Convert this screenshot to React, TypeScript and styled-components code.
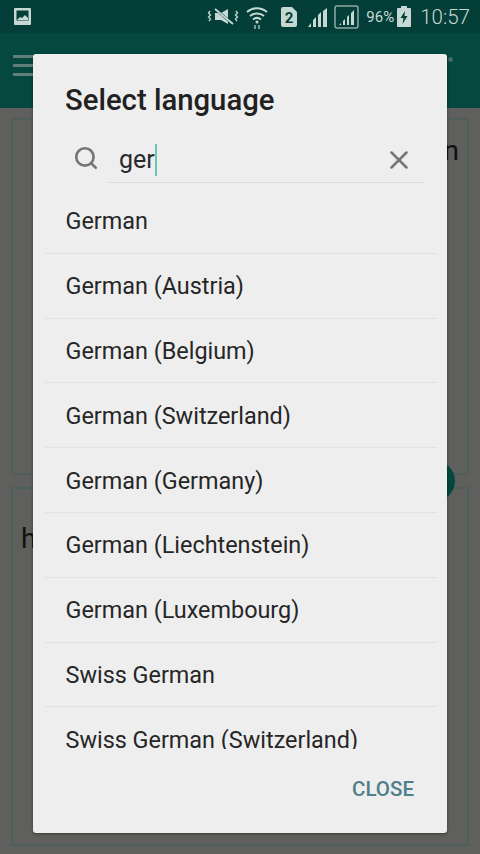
import React from "react";
import styled, { createGlobalStyle } from "styled-components";
import { Search, X } from "lucide-react";

const languages = [
  "German",
  "German (Austria)",
  "German (Belgium)",
  "German (Switzerland)",
  "German (Germany)",
  "German (Liechtenstein)",
  "German (Luxembourg)",
  "Swiss German",
  "Swiss German (Switzerland)",
];

const GlobalStyle = createGlobalStyle`
  html, body {
    margin: 0;
    padding: 0;
    background: #5d5f5d;
  }
  * {
    box-sizing: border-box;
  }
`;

const Screen = styled.div`
  position: relative;
  width: 480px;
  height: 854px;
  overflow: hidden;
  display: flex;
  flex-direction: column;
  font-family: Roboto, "Liberation Sans", sans-serif;
  background: #5f5f5e;
`;

const StatusBar = styled.div`
  height: 33px;
  flex: none;
  display: flex;
  align-items: center;
  padding: 0 10px 0 13px;
  background: #033f38;
  color: #c6d8d3;
`;

const StatusIcons = styled.div`
  margin-left: auto;
  display: flex;
  align-items: center;
`;

const Battery = styled.span`
  font-size: 15px;
  margin: 0 3px 0 7px;
`;

const Clock = styled.span`
  font-size: 20.5px;
  font-weight: 300;
  margin-left: 9px;
`;

const AppBar = styled.div`
  height: 75px;
  flex: none;
  display: flex;
  align-items: center;
  justify-content: space-between;
  padding: 0 27px 10px 13px;
  background: #04483f;
`;

const MenuLines = styled.div`
  width: 24px;
  height: 21px;
  display: flex;
  flex-direction: column;
  justify-content: space-between;
`;

const MenuLine = styled.span`
  height: 3px;
  background: #5f8079;
`;

const OverflowDot = styled.span`
  width: 5px;
  height: 5px;
  margin-bottom: 12px;
  border-radius: 50%;
  background: #3f6c64;
`;

const Cards = styled.div`
  flex: 1;
  display: flex;
  flex-direction: column;
  gap: 12px;
  padding: 10px 11px 8px;
`;

const TopCard = styled.div`
  height: 357px;
  flex: none;
  border: 2px solid #4e5f5a;
  padding: 14px 8px;
  text-align: right;
  font-size: 28px;
  color: #111;
  background: #5f5f5e;
`;

const BottomCard = styled.div`
  flex: 1;
  border: 2px solid #4e5f5a;
  padding: 33px 8px;
  font-size: 28px;
  color: #111;
  background: #5f5f5e;
`;

const Fab = styled.div`
  position: absolute;
  left: 420px;
  top: 461px;
  width: 35px;
  height: 40px;
  border-radius: 0 20px 20px 0;
  background: #03473f;
`;

const Dialog = styled.div`
  position: absolute;
  left: 33px;
  top: 54px;
  width: 414px;
  height: 779px;
  display: flex;
  flex-direction: column;
  border-radius: 3px;
  background: #eeeeee;
  box-shadow: 0 1px 3px rgba(0, 0, 0, 0.4);
`;

const Title = styled.h2`
  margin: 0;
  padding: 28px 32px 0;
  height: 71px;
  flex: none;
  font-size: 29.3px;
  line-height: 36px;
  font-weight: 500;
  color: #212121;
`;

const SearchRow = styled.div`
  height: 58px;
  flex: none;
  display: flex;
  align-items: center;
  padding: 0 22px 0 40px;
  color: #757575;
`;

const SearchField = styled.div`
  flex: 1;
  height: 58px;
  margin-left: 9px;
  display: flex;
  align-items: center;
  justify-content: space-between;
  padding: 12px 11px 0 11px;
  border-bottom: 1px solid #dcdcdc;
`;

const SearchGlyph = styled.span`
  display: flex;
  padding-top: 8px;
`;

const Query = styled.span`
  font-size: 25px;
  line-height: 32px;
  color: #2a2a2a;
  border-right: 2px solid #6fc4b6;
`;

const List = styled.ul`
  flex: 1;
  min-height: 0;
  margin: 6px 0 0;
  padding: 0 10px 0 12px;
  list-style: none;
  overflow: hidden;
`;

const Item = styled.li`
  height: 64.8px;
  display: flex;
  align-items: center;
  padding: 1px 0 0 20.5px;
  font-size: 23.4px;
  color: #262626;
  border-bottom: 1px solid #e2e2e2;
`;

const Footer = styled.div`
  height: 84px;
  flex: none;
  display: flex;
  justify-content: flex-end;
  padding: 25px 33px 0;
`;

const CloseButton = styled.button`
  height: 30px;
  padding: 0;
  border: 0;
  background: none;
  font-family: inherit;
  font-size: 20.5px;
  font-weight: 500;
  color: #4f7f8a;
`;

const App: React.FC = () => {
  return (
    <Screen>
      <GlobalStyle />
      <StatusBar>
        <svg width="19" height="19" viewBox="0 0 19 19">
          <rect x="1" y="1" width="17" height="17" rx="1" fill="#c6d8d3" />
          <rect x="3.5" y="3.5" width="12" height="10" fill="#033f38" />
          <path d="M4 13l3-3 2 1 3-3 3 3v2z" fill="#c6d8d3" />
        </svg>
        <StatusIcons>
          <svg width="33" height="20" viewBox="0 0 33 20" fill="none" stroke="#c6d8d3">
            <path d="M8 6h6l7-4v15l-7-4H8z" fill="#c6d8d3" stroke="none" />
            <path d="M7 1l20 17" strokeWidth="2.500" stroke="#033f38" />
            <path d="M8 2l18 15" strokeWidth="1.800" />
            <path d="M3 4L1.500 6l2 2-2 2 2 2L2 14M29 4l1.500 2-2 2 2 2-2 2 1.500 2" strokeWidth="1.300" />
          </svg>
          <svg width="22" height="26" viewBox="0 0 22 26" fill="none" stroke="#c6d8d3" strokeWidth="2" style={{ marginLeft: 6 }}>
            <path d="M1 8c6-5 14-5 20 0M4 12c4-3.500 10-3.500 14 0M7 15.500c2.500-2 5.500-2 8 0" />
            <circle cx="11" cy="18" r="1.500" fill="#c6d8d3" stroke="none" />
            <path d="M9 21v4M13 21v4" strokeWidth="1.200" />
          </svg>
          <svg width="18" height="22" viewBox="0 0 18 22" style={{ marginLeft: 12 }}>
            <path d="M1 3a2 2 0 0 1 2-2h9l5 5v13a2 2 0 0 1-2 2H3a2 2 0 0 1-2-2z" fill="#c6d8d3" />
            <text x="9" y="17" textAnchor="middle" fontSize="15" fontWeight="700" fontFamily="Roboto, sans-serif" fill="#033f38">2</text>
          </svg>
          <svg width="22" height="22" viewBox="0 0 22 22" fill="#c6d8d3" style={{ marginLeft: 9 }}>
            <path d="M1 21l3-4v4zM6 21v-7l3-3v10zM11 21V9l3-3v15zM16 21V5l4-3v19z" />
          </svg>
          <svg width="25" height="24" viewBox="0 0 25 24" fill="#c6d8d3" style={{ marginLeft: 5 }}>
            <rect x="1" y="1" width="23" height="22" rx="2" fill="none" stroke="#8fa8a2" strokeWidth="1.500" />
            <path d="M5 20l2-2v2zM9 20v-4l2-2v6zM13 20v-8l2-2v10zM17 20V8l3-3v15z" />
          </svg>
          <Battery>96%</Battery>
          <svg width="14" height="21" viewBox="0 0 14 21">
            <path d="M4 0h6v2h3a1 1 0 0 1 1 1v17a1 1 0 0 1-1 1H1a1 1 0 0 1-1-1V3a1 1 0 0 1 1-1h3z" fill="#c6d8d3" />
            <path d="M8 5L3.500 12H6.500L5.500 18 10.500 10H7.500z" fill="#033f38" />
          </svg>
          <Clock>10:57</Clock>
        </StatusIcons>
      </StatusBar>
      <AppBar>
        <MenuLines>
          <MenuLine />
          <MenuLine />
          <MenuLine />
        </MenuLines>
        <OverflowDot />
      </AppBar>
      <Cards>
        <TopCard>n</TopCard>
        <BottomCard>h</BottomCard>
      </Cards>
      <Fab />
      <Dialog>
        <Title>Select language</Title>
        <SearchRow>
          <SearchGlyph>
            <Search size={26} strokeWidth={2.4} />
          </SearchGlyph>
          <SearchField>
            <Query>ger</Query>
            <X size={30} strokeWidth={2} />
          </SearchField>
        </SearchRow>
        <List>
          {languages.map((language) => (
            <Item key={language}>{language}</Item>
          ))}
        </List>
        <Footer>
          <CloseButton>CLOSE</CloseButton>
        </Footer>
      </Dialog>
    </Screen>
  );
};

export default App;
